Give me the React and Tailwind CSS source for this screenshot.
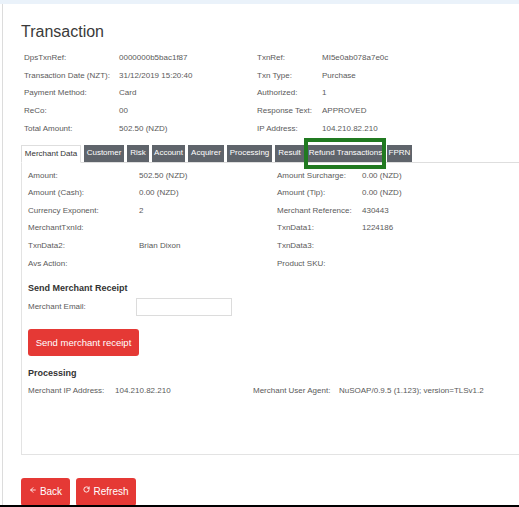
import React from 'react';
import { ArrowLeft, RotateCw } from 'lucide-react';

const info = [
  ['DpsTxnRef:', '0000000b5bac1f87', 'TxnRef:', 'MI5e0ab078a7e0c'],
  ['Transaction Date (NZT):', '31/12/2019 15:20:40', 'Txn Type:', 'Purchase'],
  ['Payment Method:', 'Card', 'Authorized:', '1'],
  ['ReCo:', '00', 'Response Text:', 'APPROVED'],
  ['Total Amount:', '502.50 (NZD)', 'IP Address:', '104.210.82.210'],
];

const merchant = [
  ['Amount:', '502.50 (NZD)', 'Amount Surcharge:', '0.00 (NZD)'],
  ['Amount (Cash):', '0.00 (NZD)', 'Amount (Tip):', '0.00 (NZD)'],
  ['Currency Exponent:', '2', 'Merchant Reference:', '430443'],
  ['MerchantTxnId:', '', 'TxnData1:', '1224186'],
  ['TxnData2:', 'Brian Dixon', 'TxnData3:', ''],
  ['Avs Action:', '', 'Product SKU:', ''],
];

const tabs = [
  ['Customer', 'w-[40px]'],
  ['Risk', 'w-[22px]'],
  ['Account', 'w-[33px]'],
  ['Acquirer', 'w-[36px]'],
  ['Processing', 'w-[45px]'],
  ['Result', 'w-[29px]'],
];

export default function App() {
  return (
    <div className="w-[519px] h-[507px] bg-white overflow-hidden flex flex-col font-['Liberation_Sans',Arial,sans-serif] text-[#5a5a5a]">
      <div className="h-[4px] shrink-0 bg-[#eaf2fa]" />
      <div className="h-[501px] shrink-0 ml-[2px] border-l border-[#dcdcdc] overflow-hidden pl-[18px]">
        <div className="mt-[18px] h-[20px] text-[16px] leading-[20px] text-[#3a3a3a]">Transaction</div>

        <div className="mt-[7px] pl-[3px] grid grid-cols-[95px_138px_65px_1fr] text-[8px]">
          {info.map((r, i) => (
            <React.Fragment key={i}>
              {r.map((c, j) => (
                <div key={j} className="h-[17.75px] flex items-center whitespace-nowrap">{c}</div>
              ))}
            </React.Fragment>
          ))}
        </div>

        <div className="mt-[7px] flex gap-[3px] border-b border-[#dedede] text-[8px] h-[18px]">
          <div className="w-[60px] h-[18px] border border-[#dedede] border-b-white bg-white text-[#333] flex items-center justify-center">Merchant Data</div>
          {tabs.map(([t, w]) => (
            <div key={t} className={`${w} h-[17px] bg-[#5f646b] text-white flex items-center justify-center whitespace-nowrap`}>{t}</div>
          ))}
          <div className="relative w-[77px] h-[17px] bg-[#5f646b] text-white flex items-center justify-center whitespace-nowrap">
            Refund Transactions
            <div className="absolute -top-[7px] -left-[3px] -right-[2px] -bottom-[7px] border-[4px] border-[#217a21]" />
          </div>
          <div className="w-[25px] h-[17px] bg-[#5f646b] text-white flex items-center justify-center">FPRN</div>
        </div>

        <div className="h-[292px] border-l border-b border-[#e3e3e3] pl-[6px] pt-[4px] text-[8px]">
          <div className="grid grid-cols-[111px_138px_85px_1fr]">
            {merchant.map((r, i) => (
              <React.Fragment key={i}>
                {r.map((c, j) => (
                  <div key={j} className="h-[17.6px] flex items-center whitespace-nowrap">{c}</div>
                ))}
              </React.Fragment>
            ))}
          </div>

          <div className="mt-[10px] h-[12px] flex items-center text-[9px] font-bold text-[#333]">Send Merchant Receipt</div>
          <div className="mt-[4px] flex items-center h-[18px]">
            <div className="w-[108px]">Merchant Email:</div>
            <div className="w-[96px] h-[18px] border border-[#dcdcdc] bg-white" />
          </div>
          <div className="mt-[13px] w-[111px] h-[27px] rounded-[3px] bg-[#e53935] text-white text-[9.5px] flex items-center justify-center">Send merchant receipt</div>

          <div className="mt-[11px] h-[12px] flex items-center text-[9px] font-bold text-[#333]">Processing</div>
          <div className="mt-[3px] grid grid-cols-[87px_138px_86px_1fr]">
            <div className="h-[17.6px] flex items-center whitespace-nowrap">Merchant IP Address:</div>
            <div className="h-[17.6px] flex items-center whitespace-nowrap">104.210.82.210</div>
            <div className="h-[17.6px] flex items-center whitespace-nowrap">Merchant User Agent:</div>
            <div className="h-[17.6px] flex items-center whitespace-nowrap">NuSOAP/0.9.5 (1.123); version=TLSv1.2</div>
          </div>
        </div>

        <div className="mt-[23px] flex gap-[6px] text-[10px] text-white">
          <div className="w-[49px] h-[28px] rounded-[3px] bg-[#e53935] flex items-center justify-center gap-[3px]">
            <ArrowLeft size={8} strokeWidth={2.5} className="-mt-[3px]" />
            <span>Back</span>
          </div>
          <div className="w-[60px] h-[28px] rounded-[3px] bg-[#e53935] flex items-center justify-center gap-[3px]">
            <RotateCw size={7} strokeWidth={3} className="-mt-[4px]" />
            <span>Refresh</span>
          </div>
        </div>
      </div>
      <div className="h-[2px] shrink-0 bg-black" />
    </div>
  );
}
